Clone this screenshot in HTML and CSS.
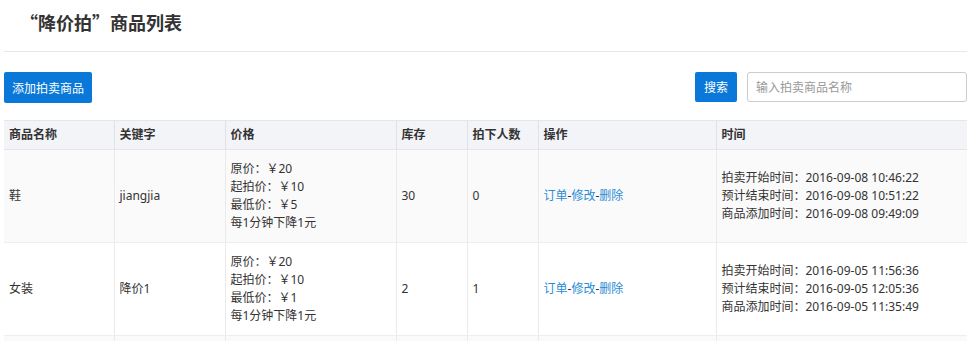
FILE: index.html
```html
<!DOCTYPE html>
<html lang="zh-CN">
<head>
  <meta charset="UTF-8">
  <meta name="viewport" content="width=device-width, initial-scale=1.0">
  <title>降价拍商品列表</title>
  <link rel="stylesheet" href="styles.css">
</head>
<body>
  <div class="page">
    <div class="page-head">
      <h3 class="page-title">“降价拍”商品列表</h3>
    </div>

    <div class="toolbar">
      <button class="btn" type="button">添加拍卖商品</button>
      <form class="search">
        <button class="btn btn-sm" type="submit">搜索</button>
        <input class="search-input" type="text" placeholder="输入拍卖商品名称">
      </form>
    </div>

    <table class="list">
      <colgroup>
        <col style="width: 110px">
        <col style="width: 111px">
        <col style="width: 171px">
        <col style="width: 71px">
        <col style="width: 71px">
        <col style="width: 178px">
        <col>
      </colgroup>
      <thead>
        <tr>
          <th>商品名称</th>
          <th>关键字</th>
          <th>价格</th>
          <th>库存</th>
          <th>拍下人数</th>
          <th>操作</th>
          <th>时间</th>
        </tr>
      </thead>
      <tbody>
        <tr>
          <td>鞋</td>
          <td>jiangjia</td>
          <td>原价：￥20<br>起拍价：￥10<br>最低价：￥5<br>每1分钟下降1元</td>
          <td>30</td>
          <td>0</td>
          <td><a href="#">订单</a>-<a href="#">修改</a>-<a href="#">删除</a></td>
          <td>拍卖开始时间：2016-09-08 10:46:22<br>预计结束时间：2016-09-08 10:51:22<br>商品添加时间：2016-09-08 09:49:09</td>
        </tr>
        <tr>
          <td>女装</td>
          <td>降价1</td>
          <td>原价：￥20<br>起拍价：￥10<br>最低价：￥1<br>每1分钟下降1元</td>
          <td>2</td>
          <td>1</td>
          <td><a href="#">订单</a>-<a href="#">修改</a>-<a href="#">删除</a></td>
          <td>拍卖开始时间：2016-09-05 11:56:36<br>预计结束时间：2016-09-05 12:05:36<br>商品添加时间：2016-09-05 11:35:49</td>
        </tr>
        <tr>
          <td>&nbsp;</td>
          <td></td>
          <td>&nbsp;<br>&nbsp;<br>&nbsp;<br>&nbsp;</td>
          <td></td>
          <td></td>
          <td></td>
          <td></td>
        </tr>
      </tbody>
    </table>
  </div>
</body>
</html>
```

FILE: styles.css
```css
body {
  margin: 0;
  font-family: "Noto Sans", "Noto Sans CJK SC", sans-serif;
  font-size: 12px;
  color: #333;
  background: #fff;
}
.page {
  padding: 0 4px;
}
.page-head {
  border-bottom: 1px solid #e8e8e8;
}
.page-title {
  margin: 0;
  padding: 10px 16px 17px;
  font-family: "Noto Sans CJK SC", sans-serif;
  font-size: 18px;
  line-height: 24px;
  font-weight: bold;
  color: #333;
}
.toolbar {
  display: flex;
  justify-content: space-between;
  align-items: flex-start;
  margin-top: 20px;
}
.btn {
  height: 31px;
  padding: 0 8px;
  border: none;
  border-radius: 2px;
  background-color: #0a78d8;
  color: #fff;
  font-family: inherit;
  font-size: 12px;
  cursor: pointer;
}
.btn-sm {
  height: 30px;
  width: 42px;
  padding: 0;
}
.search {
  display: flex;
  gap: 10px;
}
.search-input {
  width: 220px;
  height: 30px;
  box-sizing: border-box;
  padding: 0 8px;
  border: 1px solid #ccc;
  border-radius: 3px;
  font-family: inherit;
  font-size: 12px;
  color: #333;
}
.search-input::placeholder {
  color: #999;
}
.list {
  width: 963px;
  margin-top: 17px;
  border-collapse: collapse;
  table-layout: fixed;
}
.list th,
.list td {
  padding: 5px 5px;
  line-height: 18px;
  text-align: left;
  vertical-align: middle;
  border-left: 1px solid #eaeaea;
}
.list th:first-child,
.list td:first-child {
  border-left: none;
}
.list th {
  background-color: #f3f4f8;
  font-weight: bold;
  border-top: 1px solid #e4e6ec;
  border-bottom: 1px solid #e4e6ec;
  border-left-color: #e0e2e8;
}
.list td {
  padding-top: 10px;
  padding-bottom: 10px;
  border-bottom: 1px solid #eeeeee;
}
.list tbody tr:nth-child(odd) td {
  background-color: #fafafa;
}
.list a {
  color: #2a8bd5;
  text-decoration: none;
}
```
